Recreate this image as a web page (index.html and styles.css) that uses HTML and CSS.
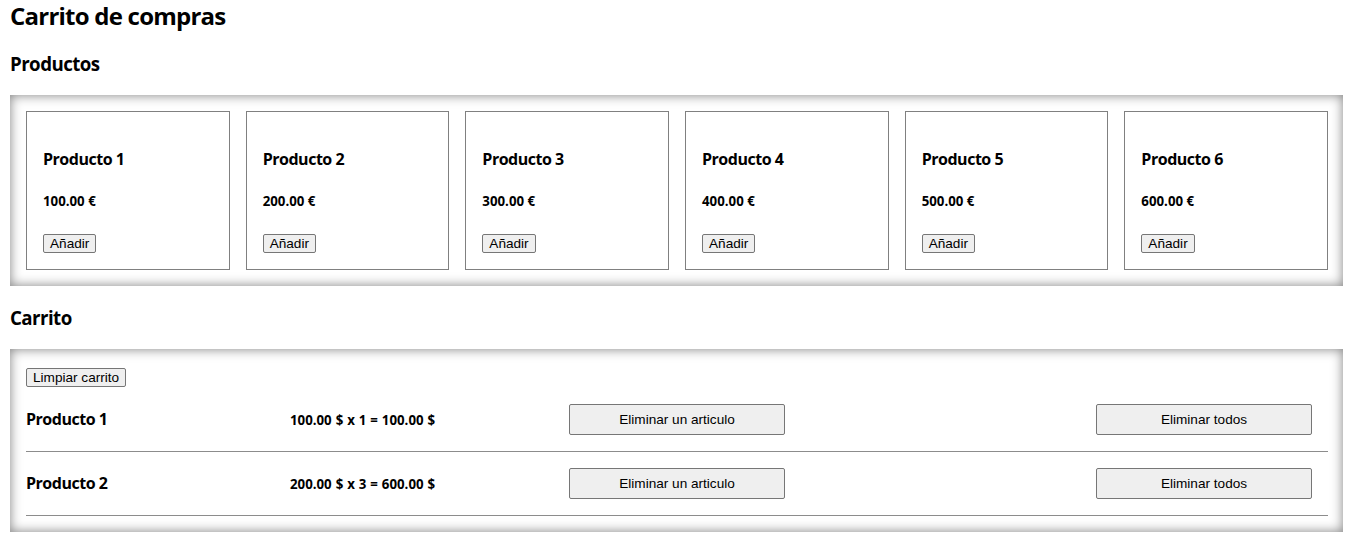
FILE: index.html
```html
<!DOCTYPE html>
<html lang="es">
<head>
<meta charset="utf-8">
<title>Carrito de compras</title>
<link rel="stylesheet" href="styles.css">
</head>
<body>
  <h2 class="title">Carrito de compras</h2>

  <h3 class="section-title">Productos</h3>
  <div class="panel products">
    <div class="card">
      <h4 class="card-name">Producto 1</h4>
      <h5 class="card-price">100.00 €</h5>
      <div class="card-actions"><button class="btn">Añadir</button></div>
    </div>
    <div class="card">
      <h4 class="card-name">Producto 2</h4>
      <h5 class="card-price">200.00 €</h5>
      <div class="card-actions"><button class="btn">Añadir</button></div>
    </div>
    <div class="card">
      <h4 class="card-name">Producto 3</h4>
      <h5 class="card-price">300.00 €</h5>
      <div class="card-actions"><button class="btn">Añadir</button></div>
    </div>
    <div class="card">
      <h4 class="card-name">Producto 4</h4>
      <h5 class="card-price">400.00 €</h5>
      <div class="card-actions"><button class="btn">Añadir</button></div>
    </div>
    <div class="card">
      <h4 class="card-name">Producto 5</h4>
      <h5 class="card-price">500.00 €</h5>
      <div class="card-actions"><button class="btn">Añadir</button></div>
    </div>
    <div class="card">
      <h4 class="card-name">Producto 6</h4>
      <h5 class="card-price">600.00 €</h5>
      <div class="card-actions"><button class="btn">Añadir</button></div>
    </div>
  </div>

  <h3 class="section-title">Carrito</h3>
  <div class="panel cart">
    <div class="cart-top"><button class="btn">Limpiar carrito</button></div>
    <div class="cart-row">
      <h4 class="cart-name">Producto 1</h4>
      <h5 class="cart-price">100.00 $ x 1 = 100.00 $</h5>
      <button class="btn btn-wide btn-one">Eliminar un articulo</button>
      <button class="btn btn-wide btn-all">Eliminar todos</button>
    </div>
    <div class="cart-row">
      <h4 class="cart-name">Producto 2</h4>
      <h5 class="cart-price">200.00 $ x 3 = 600.00 $</h5>
      <button class="btn btn-wide btn-one">Eliminar un articulo</button>
      <button class="btn btn-wide btn-all">Eliminar todos</button>
    </div>
  </div>
</body>
</html>
```

FILE: styles.css
```css
* { box-sizing: border-box; }

body {
  margin: 0;
  padding: 0 9px 0 10px;
  font-family: "Open Sans", "Noto Sans", sans-serif;
  color: #000;
  background: #fff;
}

.title {
  margin: 0 0 17px;
  font-size: 24px;
  line-height: 32px;
  font-weight: 700;
  letter-spacing: -0.032em;
}

.section-title {
  margin: 19px 0;
  font-size: 18.72px;
  line-height: 25px;
  font-weight: 700;
  letter-spacing: -0.03em;
}

.panel {
  box-shadow: inset 0 0 12px rgba(0, 0, 0, 0.5);
  padding: 16px;
}

.products {
  display: flex;
  gap: 16px;
  padding-right: 15px;
}

.card {
  flex: 1 1 0;
  border: 1px solid #808080;
  padding: 16px;
}

.card-name {
  margin: 21px 0 22px;
  font-size: 16px;
  line-height: 21px;
  font-weight: 700;
  letter-spacing: -0.03em;
}

.card-price {
  margin: 0 0 24px;
  font-size: 13.28px;
  line-height: 18px;
  font-weight: 700;
}

.card-actions {
  display: flex;
}

.btn {
  font-family: "Liberation Sans", Arial, sans-serif;
  font-size: 13.6px;
  line-height: 15px;
  padding: 1px 6px;
  color: #000;
  background: #efefef;
  border: 1px solid #767676;
  border-radius: 2px;
}

.cart {
  padding-right: 15px;
}

.cart-top {
  display: flex;
  padding: 3px 0 1px;
}

.cart-row {
  display: grid;
  grid-template-columns: 264px 279px 216px 1fr 216px 16px;
  align-items: center;
  padding: 16px 0;
  border-bottom: 1px solid #8c8c8c;
}

.cart-name {
  margin: 0;
  font-size: 16px;
  line-height: 21px;
  font-weight: 700;
  letter-spacing: -0.03em;
}

.cart-price {
  margin: 0;
  font-size: 13.28px;
  line-height: 18px;
  font-weight: 700;
  word-spacing: 0.5px;
}

.btn-wide {
  height: 31px;
  width: 216px;
}

.btn-one { grid-column: 3; }
.btn-all { grid-column: 5; }
```
